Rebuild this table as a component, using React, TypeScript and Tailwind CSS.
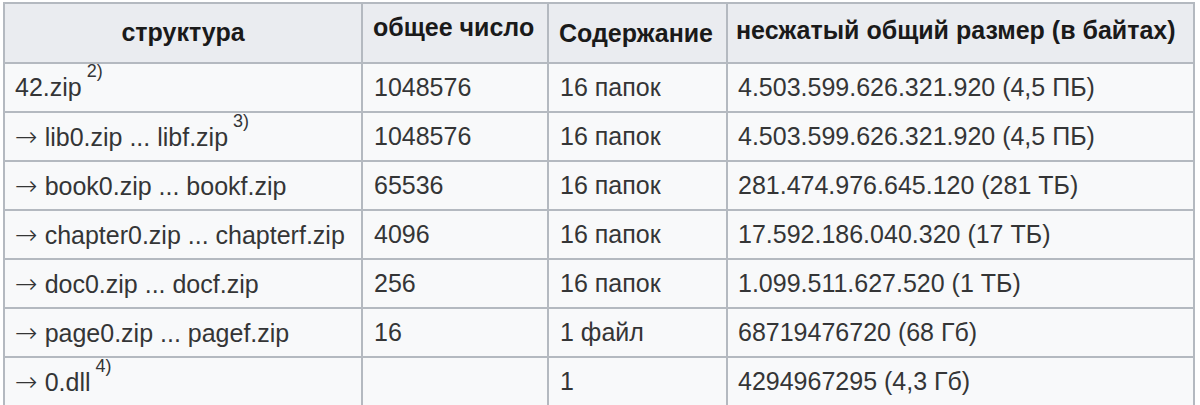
import React from "react";

const Arrow = () => (
  <span className="text-[27px] leading-none mr-[7px] font-light" style={{ fontFamily: '"DejaVu Sans", sans-serif' }}>→</span>
);
const Sup = ({ t }: { t: string }) => <sup className="text-[18px] align-[10px] ml-[5px]">{t}</sup>;

const rows: { s: React.ReactNode; n: string; c: string; sz: string }[] = [
  { s: <>42.zip<Sup t="2)" /></>, n: "1048576", c: "16 папок", sz: "4.503.599.626.321.920 (4,5 ПБ)" },
  { s: <><Arrow />lib0.zip ... libf.zip<Sup t="3)" /></>, n: "1048576", c: "16 папок", sz: "4.503.599.626.321.920 (4,5 ПБ)" },
  { s: <><Arrow />book0.zip ... bookf.zip</>, n: "65536", c: "16 папок", sz: "281.474.976.645.120 (281 ТБ)" },
  { s: <><Arrow />chapter0.zip ... chapterf.zip</>, n: "4096", c: "16 папок", sz: "17.592.186.040.320 (17 ТБ)" },
  { s: <><Arrow />doc0.zip ... docf.zip</>, n: "256", c: "16 папок", sz: "1.099.511.627.520 (1 ТБ)" },
  { s: <><Arrow />page0.zip ... pagef.zip</>, n: "16", c: "1 файл", sz: "68719476720 (68 Гб)" },
  { s: <><Arrow />0.dll<Sup t="4)" /></>, n: "", c: "1", sz: "4294967295 (4,3 Гб)" },
];

export default function App() {
  return (
    <div className="w-[1200px] h-[405px] bg-white overflow-hidden pt-[2px] pl-[3px]" style={{ fontFamily: '"Liberation Sans", Arial, sans-serif' }}>
      <table className="table-fixed border-collapse text-[#343536] text-[25px] leading-none">
        <colgroup>
          <col className="w-[358px]" />
          <col className="w-[186px]" />
          <col className="w-[179px]" />
          <col className="w-[467px]" />
        </colgroup>
        <thead>
          <tr className="h-[60px] bg-[#eaecf0] text-[#1a1a1a]">
            <th className="border-2 border-[#b4b9c0] font-bold text-center px-[10px] pb-[2px] whitespace-nowrap">структура</th>
            <th className="border-2 border-[#b4b9c0] font-bold text-left px-[10px] pb-[12px] whitespace-nowrap">общее число</th>
            <th className="border-2 border-[#b4b9c0] font-bold text-left px-[10px] pb-[0px] whitespace-nowrap">Содержание</th>
            <th className="border-2 border-[#b4b9c0] font-bold text-left px-[8px] pb-[6px] whitespace-nowrap">несжатый общий размер (в байтах)</th>
          </tr>
        </thead>
        <tbody>
          {rows.map((r, i) => (
            <tr key={i} className="h-[49px] bg-[#f8f9fa]">
              <td className="border-2 border-[#b4b9c0] px-[10px] whitespace-nowrap">{r.s}</td>
              <td className="border-2 border-[#b4b9c0] px-[11px]">{r.n}</td>
              <td className="border-2 border-[#b4b9c0] px-[11px]">{r.c}</td>
              <td className="border-2 border-[#b4b9c0] px-[10px] whitespace-nowrap">{r.sz}</td>
            </tr>
          ))}
        </tbody>
      </table>
    </div>
  );
}
